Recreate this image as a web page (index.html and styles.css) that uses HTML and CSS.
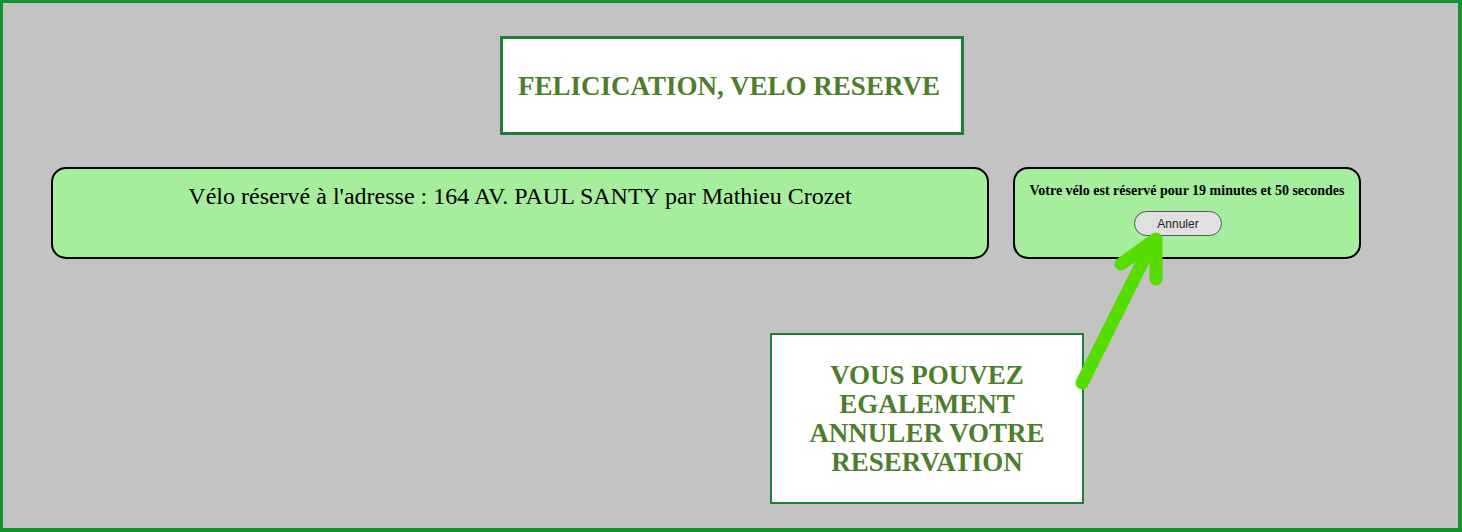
FILE: index.html
```html
<!DOCTYPE html>
<html lang="fr">
<head>
<meta charset="utf-8">
<title>Réservation</title>
<link rel="stylesheet" href="styles.css">
</head>
<body>
<div class="page">
  <div class="title-box">
    <h1 class="title">FELICICATION, VELO RESERVE</h1>
  </div>
  <div class="row">
    <div class="panel panel-main">
      <p class="address">Vélo réservé à l'adresse : 164 AV. PAUL SANTY par Mathieu Crozet</p>
    </div>
    <div class="panel panel-timer">
      <p class="timer">Votre vélo est réservé pour 19 minutes et 50 secondes</p>
      <button class="cancel" type="button">Annuler</button>
    </div>
  </div>
  <div class="note-box">
    <p class="note">VOUS POUVEZ EGALEMENT ANNULER VOTRE RESERVATION</p>
  </div>
  <svg class="arrow" width="1462" height="532" viewBox="0 0 1462 532" aria-hidden="true">
    <g fill="none" stroke="#55dd00" stroke-width="13" stroke-linecap="round" stroke-linejoin="round">
      <line x1="1082" y1="383" x2="1152" y2="243"/>
      <polyline points="1121,264 1156,239 1156,279"/>
    </g>
  </svg>
</div>
</body>
</html>
```
FILE: styles.css
```css
html, body {
  margin: 0;
  padding: 0;
}
body {
  font-family: "Liberation Serif", "Times New Roman", serif;
  background: #c3c3c3;
}
.page {
  position: relative;
  box-sizing: border-box;
  width: 1462px;
  height: 532px;
  border-style: solid;
  border-color: #10962a;
  border-width: 3px 4px 4px 3px;
  background: #c3c3c3;
  padding-top: 33px;
  overflow: hidden;
}
.title-box {
  box-sizing: border-box;
  width: 464px;
  height: 99px;
  margin-left: 497px;
  background: #fff;
  border: 3px solid #1e7f3c;
  display: flex;
  align-items: center;
  justify-content: center;
}
.title {
  margin: 0 6px 0 0;
  font-size: 27px;
  font-weight: bold;
  color: #4e7d2c;
  padding-top: 1px;
}
.row {
  display: flex;
  gap: 24px;
  margin-top: 32px;
  padding-left: 48px;
}
.panel {
  box-sizing: border-box;
  height: 92px;
  background: #a6ed9e;
  border: 2px solid #000;
  border-radius: 15px;
}
.panel-main {
  width: 938px;
}
.address {
  margin: 13px 0 0;
  text-align: center;
  font-size: 24px;
  line-height: 28px;
  color: #000;
}
.panel-timer {
  width: 348px;
  display: flex;
  flex-direction: column;
  align-items: center;
}
.timer {
  margin: 14px 0 0;
  font-size: 14px;
  font-weight: bold;
  color: #000;
}
.cancel {
  margin: 12px 18px 0 0;
  width: 88px;
  height: 25px;
  border: 1px solid #555;
  border-radius: 13px;
  background: #e0e0e0;
  font-family: "Liberation Sans", Arial, sans-serif;
  font-size: 12px;
  color: #222;
  padding: 0;
}
.note-box {
  box-sizing: border-box;
  width: 314px;
  height: 171px;
  margin-top: 74px;
  margin-left: 767px;
  background: #fff;
  border: 2px solid #1e7f3c;
  display: flex;
  align-items: center;
  justify-content: center;
}
.note {
  margin: 0 20px;
  text-align: center;
  font-size: 27px;
  line-height: 29px;
  font-weight: bold;
  color: #4e7d2c;
}
.arrow {
  position: absolute;
  left: -3px;
  top: -3px;
  pointer-events: none;
}
```
